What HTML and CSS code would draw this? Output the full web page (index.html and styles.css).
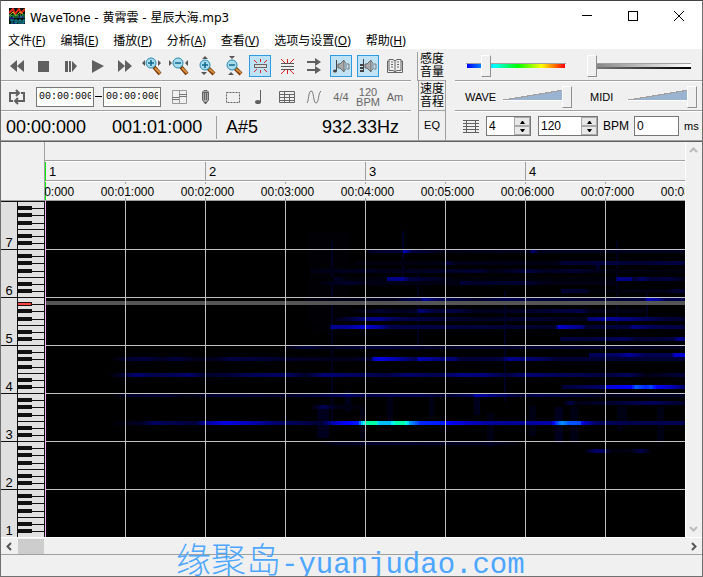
FILE: index.html
```html
<!DOCTYPE html>
<html lang="zh-CN">
<head>
  <meta charset="UTF-8">
  <meta name="viewport" content="width=device-width, initial-scale=1.0">
  <title>WaveTone</title>
  <link rel="stylesheet" href="styles.css">
</head>
<body>
  <header class="titlebar">
    <svg class="logo" width="16" height="16" viewBox="0 0 16 16">
      <rect width="16" height="16" fill="#06130c"/>
      <path d="M0 5L4 1L6 6L10 1L12 5L16 1" fill="none" stroke="#e02818" stroke-width="2"/>
      <path d="M0 8L4 4L7 8L11 4L14 6" fill="none" stroke="#c8c020" stroke-width="1"/>
      <path d="M1 6V9L3 7L5 10V6M7 10V7H9V10M11 6L12 10L14 6M15 10V6" fill="none" stroke="#28a848"/>
      <path d="M1 12H5M3 12V16M6 12H8V15H6ZM10 16V12H12V16M14 16V12H16M14 14H16" fill="none" stroke="#189cb8"/>
      <path d="M0 10H5M9 9H15M4 15H6" stroke="#3030c0"/>
    </svg>
    <h1>WaveTone - 黄霄雲 - 星辰大海.mp3</h1>
    <div class="window-buttons">
      <button aria-label="Minimize"><svg width="12" height="12"><path d="M1 5.500H11" stroke="#000"/></svg></button>
      <button aria-label="Maximize"><svg width="12" height="12"><rect x="1.500" y="1.500" width="9" height="9" fill="none" stroke="#000"/></svg></button>
      <button aria-label="Close"><svg width="12" height="12"><path d="M1 1L11 11M11 1L1 11" stroke="#000"/></svg></button>
    </div>
  </header>
  <nav class="menu">
    <button>文件(<u>F</u>)</button>
    <button>编辑(<u>E</u>)</button>
    <button>播放(<u>P</u>)</button>
    <button>分析(<u>A</u>)</button>
    <button>查看(<u>V</u>)</button>
    <button>选项与设置(<u>O</u>)</button>
    <button>帮助(<u>H</u>)</button>
  </nav>

  <section class="panels">
    <div class="tools">
      <div class="bar bar-first">
        <button class="tool" aria-label="Rewind"><svg width="16" height="16" fill="#606060"><path d="M8 2V14L1 8ZM15 2V14L8 8Z"/></svg></button>
        <button class="tool" aria-label="Stop"><svg width="16" height="16" fill="#606060"><rect x="2" y="3" width="11" height="11"/></svg></button>
        <button class="tool" aria-label="Step"><svg width="16" height="16" fill="#606060"><path d="M2 3H5V14H2ZM6 3H8V14H6ZM9 3L14 8L9 14Z"/></svg></button>
        <button class="tool" aria-label="Play"><svg width="16" height="16" fill="#606060"><path d="M2 2L14 8L2 15Z"/></svg></button>
        <button class="tool" aria-label="Forward"><svg width="16" height="16" fill="#606060"><path d="M1 2L8 8L1 14ZM8 2L15 8L8 14Z"/></svg></button>
        <button class="tool" aria-label="Zoom in time"><svg width="20" height="20"><path d="M12 11L18 18" stroke="#7a3c08" stroke-width="4"/><path d="M13 12L18 17" stroke="#d89040" stroke-width="2"/><circle cx="9" cy="7" r="5" fill="#a8dcec" stroke="#2888b0"/><path d="M6 7H12M9 4V10" stroke="#106890" stroke-width="1.500"/><path d="M3 4V10L0 7ZM16 4V10L19 7Z" fill="#555"/></svg></button>
        <button class="tool" aria-label="Zoom out time"><svg width="20" height="20"><path d="M12 11L18 18" stroke="#7a3c08" stroke-width="4"/><path d="M13 12L18 17" stroke="#d89040" stroke-width="2"/><circle cx="9" cy="7" r="5" fill="#a8dcec" stroke="#2888b0"/><path d="M6 7H12" stroke="#106890" stroke-width="1.500"/><path d="M0 4V10L3 7ZM19 4V10L16 7Z" fill="#555"/></svg></button>
        <button class="tool" aria-label="Zoom in pitch"><svg width="20" height="20"><path d="M12 12L18 18" stroke="#7a3c08" stroke-width="4"/><path d="M13 13L18 17" stroke="#d89040" stroke-width="2"/><circle cx="9" cy="9" r="5" fill="#a8dcec" stroke="#2888b0"/><path d="M6 9H12M9 6V12" stroke="#106890" stroke-width="1.500"/><path d="M6 3H12L9 0ZM5 16H11L8 19Z" fill="#555"/></svg></button>
        <button class="tool" aria-label="Zoom out pitch"><svg width="20" height="20"><path d="M12 12L18 18" stroke="#7a3c08" stroke-width="4"/><path d="M13 13L18 17" stroke="#d89040" stroke-width="2"/><circle cx="9" cy="9" r="5" fill="#a8dcec" stroke="#2888b0"/><path d="M6 9H12" stroke="#106890" stroke-width="1.500"/><path d="M6 0H12L9 3ZM5 19H11L8 16Z" fill="#555"/></svg></button>
        <button class="tool on" aria-label="Single bar"><svg width="16" height="16" fill="none"><rect x="2.500" y="6.500" width="12" height="3" stroke="#666" fill="#ddd"/><path d="M8.500 1V4M8.500 12V15M2 2L5 5M15 2L12 5M2 14L5 11M15 14L12 11" stroke="#e02020"/></svg></button>
        <button class="tool" aria-label="Multi bars"><svg width="16" height="16" fill="none"><path d="M2 5.500H15M2 8.500H15M2 11.500H15" stroke="#555"/><path d="M8.500 1V5M8.500 12V16M2 1L6 5M15 1L11 5M2 16L6 12M15 16L11 12" stroke="#e02020"/></svg></button>
        <button class="tool" aria-label="Follow"><svg width="16" height="16" fill="#606060"><path d="M1 3H9V0L15 4L9 8V5H1ZM1 11H9V8L15 12L9 16V13H1Z"/></svg></button>
        <button class="tool on" aria-label="Note sound"><svg width="18" height="16" fill="none"><path d="M4.500 2V13" stroke="#444"/><ellipse cx="3" cy="13" rx="2" ry="1.500" fill="#444"/><path d="M6 6H8L12 2V14L8 10H6Z" fill="#aaa" stroke="#666"/><path d="M12 3L14 5V11L12 13M15 6H17V11H15" stroke="#777"/></svg></button>
        <button class="tool on" aria-label="Chord sound"><svg width="18" height="16" fill="none"><path d="M4.500 1V14" stroke="#444"/><path d="M1 7H4M1 10H4M1 13H4" stroke="#444" stroke-width="2"/><path d="M6 6H8L12 2V14L8 10H6Z" fill="#aaa" stroke="#666"/><path d="M12 3L14 5V11L12 13M15 6H17V11H15" stroke="#777"/></svg></button>
        <button class="tool" aria-label="Manual"><svg width="18" height="16" fill="none" stroke="#666"><path d="M9 3L7 1.500H3V12.500H7L9 14L11 12.500H15V1.500H11ZM9 3V14M3 3H1.500V14.500H16.500V3H15M5 4H7M5 6.500H7M5 9H7M11 4H13M11 6.500H13M11 9H13"/></svg></button>
      </div>
      <div class="bar">
        <button class="tool" aria-label="Loop"><svg width="18" height="16" fill="none" stroke="#606060" stroke-width="2"><path d="M5 12H2V4H11M8 1L11 4L8 7M13 4H16V12H7M10 9L7 12L10 15"/></svg></button>
        <div class="range-fields">
          <input class="time" type="text" aria-label="Loop start" value="00:00:000">
          <span class="dash"></span>
          <input class="time" type="text" aria-label="Loop end" value="00:00:000">
        </div>
        <button class="tool" aria-label="Layout"><svg width="16" height="16" fill="none" stroke="#777"><path d="M1.500 1.500H15.500V14.500H1.500ZM8.500 1V15" stroke="#999"/><path d="M1 8.500H8M1 10.500H8M8 5.500H16M8 7.500H16"/></svg></button>
        <button class="tool" aria-label="Pencil"><svg width="16" height="16" fill="none" stroke="#666"><path d="M4.500 3L6 1.500H9L10.500 3V11L7.500 15L4.500 11Z" fill="#aaa"/><path d="M6.500 4V11M8.500 4V11M5 3.500H10"/><path d="M6 13H9L7.500 15Z" fill="#555" stroke="none"/></svg></button>
        <button class="tool" aria-label="Select"><svg width="16" height="16" fill="none"><rect x="1.500" y="3.500" width="13" height="10" stroke="#606060" stroke-dasharray="2 1"/></svg></button>
        <button class="tool" aria-label="Note"><svg width="16" height="16"><path d="M8.500 1V13" stroke="#606060"/><ellipse cx="6" cy="13" rx="3" ry="2" fill="#606060"/></svg></button>
        <button class="tool" aria-label="Table"><svg width="16" height="16" fill="none" stroke="#666"><path d="M0.500 2.500H15.500V13.500H0.500ZM0 5.500H16M0 8.500H16M0 11.500H16M5.500 2V14M10.500 5V14"/></svg></button>
        <button class="tool" aria-label="Curve"><svg width="16" height="16" fill="none" stroke="#777"><path d="M1 14C3 12 2 3 5 2C8 1 7 14 10 14C13 14 12 4 15 2"/></svg></button>
        <button class="tool text">4/4</button>
        <button class="tool text">120<br>BPM</button>
        <button class="tool text">Am</button>
      </div>
      <div class="readout">
        <div class="clocks"><span>00:00:000</span><span>001:01:000</span></div>
        <div class="pitch"><span>A#5</span><span>932.33Hz</span></div>
      </div>
    </div>
    <div class="tabs">
      <button class="tab tab-on">感度<br>音量</button>
      <button class="tab">速度<br>音程</button>
      <button class="tab">EQ</button>
    </div>
    <div class="settings">
      <div class="bar bar-first sliders">
        <input class="slider rainbow" type="range" aria-label="Sensitivity" min="0" max="100" value="17">
        <input class="slider contrast" type="range" aria-label="Contrast" min="0" max="100" value="0">
      </div>
      <div class="bar volumes">
        <label for="wave">WAVE</label>
        <input class="slider wedge" id="wave" type="range" min="0" max="100" value="100">
        <label for="midi">MIDI</label>
        <input class="slider wedge" id="midi" type="range" min="0" max="100" value="100">
      </div>
      <div class="tempo">
        <svg width="16" height="14" stroke="#606060" fill="none"><path d="M0 1.500H16M0 4.500H16M0 7.500H16M0 10.500H16M3.500 1V14M12.500 1V14M0 13.500H16"/></svg>
        <div class="spin">
          <input class="beats" type="text" aria-label="Beats" value="4">
          <div class="arrows"><button aria-label="More beats"><svg width="7" height="4"><path d="M1 4L3 1H4L6 4Z"/></svg></button><button aria-label="Fewer beats"><svg width="7" height="4"><path d="M1 0H6L4 3H3Z"/></svg></button></div>
        </div>
        <div class="spin">
          <input class="bpm" id="bpm" type="text" value="120">
          <div class="arrows"><button aria-label="Faster"><svg width="7" height="4"><path d="M1 4L3 1H4L6 4Z"/></svg></button><button aria-label="Slower"><svg width="7" height="4"><path d="M1 0H6L4 3H3Z"/></svg></button></div>
        </div>
        <label for="bpm">BPM</label>
        <input class="offset" id="offset" type="text" value="0">
        <label class="unit" for="offset">ms</label>
      </div>
    </div>
  </section>

  <main class="editor">
    <div class="corner"></div>
    <div class="ruler">
      <div class="lane"></div>
      <div class="lane measures"><span>1</span><span>2</span><span>3</span><span>4</span></div>
      <div class="times">
        <span>00:00:000</span><span>00:01:000</span><span>00:02:000</span><span>00:03:000</span><span>00:04:000</span><span>00:05:000</span><span>00:06:000</span><span>00:07:000</span><span>00:08:000</span>
      </div>
    </div>
    <div class="vscroll">
      <button aria-label="Scroll up"><svg width="9" height="6"><path d="M1 5L4.500 1.500L8 5" fill="none" stroke="#bbb" stroke-width="2"/></svg></button>
      <button aria-label="Scroll down"><svg width="9" height="6"><path d="M1 1L4.500 4.500L8 1" fill="none" stroke="#bbb" stroke-width="2"/></svg></button>
    </div>
    <div class="keyboard">
      <div class="octaves"><span>7</span><span>6</span><span>5</span><span>4</span><span>3</span><span>2</span><span>1</span></div>
      <svg id="keys" width="26" height="336" shape-rendering="crispEdges"></svg>
    </div>
    <div class="spectrum"><svg id="spectrum" width="640" height="336" shape-rendering="crispEdges"></svg></div>
  </main>
  <div class="hscroll">
    <button aria-label="Scroll left"><svg width="6" height="9"><path d="M5 1L1.500 4.500L5 8" fill="none" stroke="#555" stroke-width="2"/></svg></button>
    <div class="thumb"></div>
    <button aria-label="Scroll right"><svg width="6" height="9"><path d="M1 1L4.500 4.500L1 8" fill="none" stroke="#555" stroke-width="2"/></svg></button>
  </div>
  <footer class="status"></footer>
  <div class="watermark"><span class="mark-name">缘聚岛</span>-yuanjudao.com</div>
  <script src="script.js"></script>
</body>
</html>
```
FILE: styles.css
```css
* {
  box-sizing: border-box;
}
body {
  margin: 0;
  height: 100vh;
  overflow: hidden;
  position: relative;
  display: flex;
  flex-direction: column;
  background: #f0f0f0;
  border: 1px solid #707070;
  border-top-color: #444;
  font-family: "Liberation Sans", "Noto Sans CJK SC", sans-serif;
  font-size: 12px;
  color: #000;
}
button {
  font: inherit;
  color: inherit;
  background: none;
  border: none;
  padding: 0;
}
svg {
  display: block;
}
.titlebar {
  height: 30px;
  background: #fff;
  display: flex;
  align-items: center;
  padding-left: 8px;
}
.titlebar h1 {
  margin: 0 0 0 5px;
  font: 12px "DejaVu Sans", "Noto Sans CJK SC", sans-serif;
}
.window-buttons {
  display: flex;
  margin-left: auto;
}
.window-buttons button {
  width: 46px;
  height: 30px;
  display: flex;
  align-items: center;
  justify-content: center;
}
.menu {
  height: 18px;
  background: #fff;
  display: flex;
  gap: 1px;
  font: 12px/20px "Noto Sans", "Noto Sans CJK SC", sans-serif;
}
.menu button {
  padding: 0 7px;
}
.panels {
  display: flex;
  height: 93px;
  flex: none;
  border-bottom: 1px solid #606060;
  box-shadow: inset 0 -1px #a0a0a0;
}
.tools {
  flex: none;
}
.bar {
  display: flex;
  align-items: center;
  gap: 5px;
  height: 30px;
  padding: 0 5px;
  border-bottom: 1px solid #fff;
  box-shadow: inset 0 -1px #a0a0a0;
}
.bar-first {
  height: 33px;
  padding-top: 2px;
}
.tool {
  width: 22px;
  height: 22px;
  display: flex;
  align-items: center;
  justify-content: center;
}
.on {
  background: #bfe2f5;
  border: 1px solid #2f9be0;
}
.text {
  font-size: 11px;
  line-height: 10px;
  color: #666;
}
input[type="text"] {
  height: 20px;
  border: 1px solid #777;
  background: #fff;
  padding: 0 2px;
  margin: 0;
  font: 12px "Liberation Sans", sans-serif;
  color: #000;
}
.range-fields {
  display: flex;
  align-items: center;
  width: 130px;
  padding-left: 3px;
}
input.time {
  width: 58px;
  font: 10px "Liberation Mono", monospace;
}
.dash {
  width: 7px;
  height: 1px;
  margin: 0 1px;
  background: #000;
}
.readout {
  display: flex;
  align-items: center;
  height: 28px;
  padding-top: 2px;
  font-size: 18px;
}
.clocks {
  display: flex;
  gap: 26px;
  width: 216px;
  padding-left: 5px;
  line-height: 23px;
  border-right: 1px solid #a0a0a0;
}
.pitch {
  flex: 1;
  display: flex;
  justify-content: space-between;
  padding: 0 12px 0 9px;
}
.tabs {
  width: 29px;
  margin: 0 9px 0 6px;
  display: flex;
  flex-direction: column;
}
.tab {
  height: 30px;
  margin-left: 1px;
  border: 1px solid #a0a0a0;
  border-top: none;
  line-height: 13px;
  font-size: 12px;
}
.tab-on {
  height: 29px;
  margin: 3px 0 0;
  border-right: none;
  text-align: center;
}
.tab:last-child {
  font-size: 11px;
}
.settings {
  flex: 1;
}
.sliders {
  gap: 21px;
  padding-left: 11px;
}
.volumes {
  gap: 8px;
  padding-left: 10px;
  font-size: 11px;
}
.volumes label {
  width: 29px;
}
.volumes label:nth-of-type(2) {
  margin-left: 10px;
}
.slider {
  appearance: none;
  height: 22px;
  margin: 0;
  background-color: transparent;
  background-repeat: no-repeat;
}
.slider::-webkit-slider-thumb {
  appearance: none;
  width: 10px;
  height: 22px;
  background: #f0f0f0;
  border: 1px solid #fff;
  border-right-color: #909090;
  border-bottom-color: #909090;
}
.rainbow {
  width: 100px;
  background-image: linear-gradient(#a0a0a0, #a0a0a0), linear-gradient(90deg, #00f, #00a0ff 18%, #0ff 28%, #0f0 52%, #ff0 76%, #f00);
  background-size: 100px 1px, 98px 4px;
  background-position: 0 8px, 1px 9px;
}
.contrast {
  width: 104px;
  background-image: linear-gradient(#a0a0a0, #a0a0a0), linear-gradient(90deg, #808080, #fff), linear-gradient(90deg, #808080, #000);
  background-size: 100px 1px, 100px 3px, 100px 2px;
  background-position: 4px 8px, 4px 9px, 4px 12px;
}
.wedge {
  width: 70px;
  background-image: linear-gradient(#fff, #fff), linear-gradient(to bottom right, transparent 48%, #a0a0a0 48%, #a0a0a0 54%, #9ab3d0 54%);
  background-size: 60px 1px, 60px 10px;
  background-position: 0 14px, 0 4px;
}
.tempo {
  display: flex;
  align-items: center;
  gap: 5px;
  height: 28px;
  padding-left: 8px;
}
.spin {
  display: flex;
  margin-left: 2px;
  border: 1px solid #777;
  background: #fff;
}
.spin input[type="text"] {
  height: 18px;
  border: none;
}
.spin .beats {
  width: 27px;
}
.spin .bpm {
  width: 42px;
}
.arrows {
  width: 16px;
  display: flex;
  flex-direction: column;
}
.arrows button {
  height: 9px;
  display: flex;
  align-items: center;
  justify-content: center;
  background: #e8e8e8;
  border: 1px solid #aaa;
}
.tempo .offset {
  width: 45px;
}
.unit {
  font-size: 11px;
}
.editor {
  flex: 1;
  min-height: 0;
  display: grid;
  grid-template-columns: 44px 1fr 17px;
  grid-template-rows: 59px 1fr;
}
.corner {
  border-right: 1px solid #a0a0a0;
  border-bottom: 1px solid #a0a0a0;
}
.ruler {
  overflow: hidden;
  border-bottom: 1px solid #a0a0a0;
}
.lane {
  height: 20px;
  border-bottom: 1px solid #fff;
  box-shadow: inset 0 -1px #a0a0a0;
}
.measures {
  display: flex;
  font-size: 13px;
  line-height: 19px;
}
.measures span {
  flex: none;
  width: 160px;
  padding-left: 3px;
  border-left: 1px solid #a0a0a0;
}
.measures span:first-child {
  border-left-color: #0e0;
}
.times {
  display: flex;
  margin-left: -40px;
  line-height: 20px;
}
.times span {
  flex: none;
  width: 80px;
  padding-left: 5px;
  text-align: center;
  background: linear-gradient(#a0a0a0, #a0a0a0) 40px 0 / 1px 2px no-repeat, linear-gradient(#a0a0a0, #a0a0a0) 40px 16px / 1px 2px no-repeat;
}
.times span:first-child {
  background: linear-gradient(#0e0, #0e0) 40px 0 / 1px 19px no-repeat;
}
.vscroll {
  grid-row: 1 / 3;
  grid-column: 3;
  border-left: 1px solid #fff;
  display: flex;
  flex-direction: column;
  justify-content: space-between;
  padding: 5px 3px;
}
.keyboard {
  display: flex;
  overflow: hidden;
  background: #e0e0e0;
  border-right: 1px solid #111;
}
.octaves {
  width: 17px;
  border-right: 1px solid #111;
}
.octaves span {
  display: block;
  height: 48px;
  padding-top: 35px;
  text-align: center;
  font-size: 13px;
  line-height: 14px;
  box-shadow: inset 0 1px #111;
}
.spectrum {
  overflow: hidden;
  background: #000;
}
.hscroll {
  flex: none;
  height: 17px;
  display: flex;
  align-items: center;
  border-top: 1px solid #fff;
  padding: 0 5px;
}
.thumb {
  width: 26px;
  height: 15px;
  margin: 0 auto 0 6px;
  background: #cdcdcd;
}
.status {
  flex: none;
  height: 22px;
  border-top: 1px solid #a0a0a0;
}
.watermark {
  position: absolute;
  left: 175px;
  bottom: -15px;
  display: flex;
  align-items: baseline;
  white-space: nowrap;
  font: 29px/50px "Liberation Mono", monospace;
  color: #4da6ff;
}
.mark-name {
  font: 300 35px/50px "Noto Sans CJK SC", sans-serif;
}
```
FILE: script.js
```javascript
const SVG_NS = 'http://www.w3.org/2000/svg';

function addRect(parent, x, y, width, height, fill) {
  const rect = document.createElementNS(SVG_NS, 'rect');
  rect.setAttribute('x', x);
  rect.setAttribute('y', y);
  rect.setAttribute('width', width);
  rect.setAttribute('height', height);
  rect.setAttribute('fill', fill);
  parent.appendChild(rect);
}

// 48px per octave, black keys are 4px tall
const keys = document.getElementById('keys');
for (let octave = 0; octave < 7; octave++) {
  const top = octave * 48;
  addRect(keys, 0, top, 26, 1, '#111');
  [7, 14, 22, 28, 35, 42].forEach(y => addRect(keys, 0, top + y, 26, 1, '#111'));
  [5, 12, 20, 33, 40].forEach(y => addRect(keys, 0, top + y, 14, 4, '#111'));
}
addRect(keys, 0, 102, 13, 2, '#ff4040');

// black -> blue -> cyan -> green
function levelColor(v) {
  const blue = v > 510 ? 765 - v : Math.min(v, 255);
  const green = Math.max(0, Math.min(255, v - 255));
  return `rgb(0,${Math.round(green)},${Math.round(blue)})`;
}

// each row: y, then [x, level] points
const rows = [
  [48, [[320, 0], [325, 40], [357, 50], [358, 190], [366, 60], [400, 20], [484, 30], [486, 120], [493, 30], [640, 30]]],
  [60, [[310, 15], [398, 20], [400, 75], [408, 25], [512, 20], [516, 55], [540, 50], [560, 65], [590, 50], [640, 70]]],
  [64, [[540, 0], [551, 20], [552, 60], [555, 10]]],
  [68, [[265, 20], [320, 35], [340, 25], [435, 50], [445, 20], [465, 40], [480, 60], [500, 35], [530, 50], [560, 15], [640, 15]]],
  [76, [[285, 0], [290, 40], [300, 10], [341, 15], [342, 130], [356, 145], [364, 65], [388, 40], [410, 10], [569, 10], [572, 135], [585, 130], [588, 50], [596, 100], [606, 50], [624, 65], [640, 20]]],
  [80, [[275, 15], [306, 45], [320, 20], [413, 20], [415, 60], [430, 40], [480, 50], [500, 20], [570, 20]]],
  [88, [[514, 0], [516, 55], [540, 45], [545, 10], [620, 20], [630, 50], [640, 50]]],
  [96, [[260, 15], [350, 30], [358, 70], [374, 80], [378, 155], [390, 90], [410, 65], [430, 40], [460, 80], [490, 60], [560, 50], [598, 60], [602, 190], [612, 150], [620, 70], [640, 80]]],
  [108, [[300, 0], [333, 50], [350, 30], [370, 40], [374, 120], [390, 50], [406, 70], [430, 30], [480, 40], [515, 60], [535, 75], [545, 25], [600, 20]]],
  [116, [[290, 20], [305, 60], [320, 130], [334, 140], [350, 80], [380, 60], [440, 30], [480, 50], [540, 25], [543, 115], [560, 155], [590, 110], [620, 55], [640, 45]]],
  [124, [[240, 0], [283, 5], [286, 145], [300, 150], [320, 210], [333, 160], [345, 75], [400, 65], [480, 50], [509, 40], [513, 200], [536, 130], [540, 50], [583, 65], [587, 130], [610, 80], [640, 65]]],
  [136, [[513, 0], [516, 65], [540, 55], [580, 90], [590, 50], [627, 60], [632, 130], [640, 130]]],
  [144, [[240, 20], [260, 60], [280, 35], [330, 65], [390, 40], [460, 45], [530, 50], [640, 30]]],
  [152, [[542, 0], [544, 85], [570, 100], [583, 155], [600, 80], [625, 80], [629, 200], [640, 215]]],
  [156, [[65, 0], [80, 45], [100, 65], [115, 35], [130, 65], [150, 25], [170, 30], [185, 70], [240, 40], [300, 25], [325, 50], [328, 190], [335, 225], [350, 170], [370, 80], [373, 180], [390, 130], [408, 120], [415, 55], [455, 60], [463, 140], [490, 105], [512, 50], [640, 55]]],
  [172, [[62, 0], [75, 40], [90, 115], [108, 75], [130, 90], [142, 110], [160, 45], [180, 55], [210, 90], [240, 100], [260, 40], [278, 120], [320, 90], [340, 65], [360, 110], [390, 80], [415, 130], [438, 125], [460, 60], [480, 120], [512, 90], [560, 60], [582, 90], [600, 20], [640, 60]]],
  [184, [[514, 0], [518, 60], [545, 90], [558, 110], [560, 210], [585, 245], [590, 345], [600, 290], [605, 325], [611, 240], [625, 190], [640, 90]]],
  [192, [[65, 0], [80, 40], [120, 50], [140, 20], [175, 55], [240, 40], [280, 70], [302, 110], [320, 75], [370, 85], [400, 50], [426, 90], [430, 170], [450, 120], [475, 50], [490, 80], [530, 60], [560, 30], [640, 40]]],
  [200, [[516, 0], [525, 75], [530, 20], [570, 50], [605, 90], [640, 40]]],
  [204, [[265, 0], [277, 85], [290, 25], [320, 10]]],
  [220, [[62, 0], [80, 20], [98, 45], [108, 100], [125, 75], [150, 60], [158, 150], [180, 225], [205, 180], [230, 110], [255, 80], [275, 50], [287, 170], [298, 240], [312, 280], [316, 450], [320, 600], [330, 600], [333, 450], [344, 440], [350, 590], [358, 590], [364, 410], [375, 290], [396, 280], [410, 225], [440, 160], [470, 150], [505, 170], [510, 300], [516, 400], [523, 340], [534, 330], [537, 210], [550, 100], [580, 75], [640, 85]]],
  [240, [[270, 0], [290, 35], [330, 45], [450, 35], [480, 0]]],
  [248, [[538, 0], [550, 105], [558, 90], [566, 10], [585, 20], [595, 75], [605, 10]]]
];

const spectrum = document.getElementById('spectrum');

// soft vertical smears behind the partials
[[272, 205, 12, 32, 0.3], [286, 40, 2, 180, 0.3], [300, 190, 6, 20, 0.3], [315, 208, 6, 30, 0.2], [342, 196, 6, 24, 0.2],
 [357, 30, 2, 50, 0.4], [372, 70, 2, 80, 0.3], [384, 196, 5, 20, 0.2], [429, 196, 6, 18, 0.3], [442, 212, 7, 34, 0.2],
 [459, 90, 2, 110, 0.35], [484, 205, 7, 30, 0.2], [510, 206, 8, 36, 0.3], [525, 206, 8, 36, 0.2], [571, 40, 2, 90, 0.3],
 [572, 205, 6, 25, 0.2], [601, 90, 2, 30, 0.35], [612, 206, 7, 34, 0.2], [578, 206, 4, 20, 0.2], [265, 30, 40, 100, 0.05]
].forEach(([x, y, w, h, opacity]) => addRect(spectrum, x, y, w, h, `rgba(0,0,100,${opacity})`));

rows.forEach(([y, points]) => {
  for (let i = 0; i < points.length - 1; i++) {
    const [x1, v1] = points[i];
    const [x2, v2] = points[i + 1];
    for (let x = x1; x < x2; x += 2) {
      const level = v1 + (v2 - v1) * (x - x1) / (x2 - x1);
      addRect(spectrum, x, y, Math.min(2, x2 - x), 4, levelColor(level));
    }
  }
});

addRect(spectrum, 0, 100, 640, 4, '#555');
for (let x = 80; x < 640; x += 80) {
  addRect(spectrum, x, 0, 1, 336, '#c0c0c0');
}
for (let y = 48; y < 336; y += 48) {
  addRect(spectrum, 0, y, 640, 1, '#c0c0c0');
}
addRect(spectrum, 0, 0, 1, 336, '#f0b0f0');
```
